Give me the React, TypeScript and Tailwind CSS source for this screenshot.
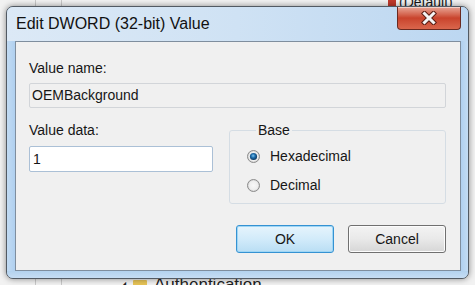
import React from "react";

const font = { fontFamily: '"Liberation Sans", Arial, sans-serif' };

function Radio({ checked, id }: { checked?: boolean; id: string }) {
	return (
		<svg width="13" height="13" viewBox="0 0 13 13" className="shrink-0">
			<defs>
				<radialGradient id={`rf-${id}`} cx="0.5" cy="0.5" r="0.5">
					<stop offset="0%" stopColor="#f8f8f8" />
					<stop offset="70%" stopColor="#eeeeee" />
					<stop offset="100%" stopColor="#cfcfcf" />
				</radialGradient>
				<radialGradient id={`rd-${id}`} cx="0.45" cy="0.4" r="0.6">
					<stop offset="0%" stopColor="#7cc4ee" />
					<stop offset="45%" stopColor="#1f6fae" />
					<stop offset="100%" stopColor="#0c355c" />
				</radialGradient>
			</defs>
			<circle cx="6.5" cy="6.5" r="6" fill={`url(#rf-${id})`} stroke="#8c8c8c" strokeWidth="1" />
			{checked && <circle cx="6.5" cy="6.5" r="3.6" fill={`url(#rd-${id})`} />}
		</svg>
	);
}

function CloseGlyph() {
	return (
		<svg width="16" height="14" viewBox="0 0 16 14">
			<path d="M3.5 2.5 L12.5 11.5 M12.5 2.5 L3.5 11.5" stroke="#5b1e14" strokeWidth="5" strokeLinecap="square" />
			<path d="M3.5 2.5 L12.5 11.5 M12.5 2.5 L3.5 11.5" stroke="#f4f4f4" strokeWidth="3" strokeLinecap="square" />
		</svg>
	);
}

export default function App() {
	return (
		<div className="relative w-[475px] h-[285px] overflow-hidden bg-[#f2f2f2] text-[#161616]" style={font}>
			{/* regedit window behind */}
			<div className="absolute inset-0 flex">
				<div className="w-[36px] border-r border-[#c9c9c9]" />
				<div className="w-[26px] border-r border-[#c9c9c9]" />
				<div className="flex-1" />
			</div>
			<div className="absolute left-[388px] top-[-4px] flex items-center gap-[3px] text-[14px] leading-[12px]">
				<span className="w-[8px] h-[7px] bg-[#c0392b]" />
				<span>(Default)</span>
			</div>
			<div className="absolute left-[120px] top-[276px] flex items-center gap-[7px] text-[17px] leading-[18px] text-[#222]">
				<span className="text-[8px]">◢</span>
				<span className="w-[14px] h-[11px] bg-[#e6c356] rounded-[1px]" />
				<span>Authentication</span>
			</div>

			{/* dialog window */}
			<div className="absolute left-[6px] top-[6px] w-[463px] h-[273px] rounded-[7px] border border-[#525a63] bg-[#b9d5f0] shadow-[0_0_6px_rgba(0,0,0,0.45)] flex flex-col overflow-hidden">
				<div className="h-[34px] flex items-start bg-gradient-to-r from-[#dce9f6] via-[#cfe2f4] to-[#bcd7f1]">
					<div className="pl-[9px] mt-[7px] text-[16px] leading-[20px] text-[#111]">
						Edit DWORD (32-bit) Value
					</div>
					<div className="ml-auto mr-[7px] w-[64px] h-[23px] rounded-b-[4px] border border-t-0 border-[#6a2a20] bg-gradient-to-b from-[#e7a596] via-[#c9432c] to-[#d9664c] flex items-center justify-center shadow-[inset_0_1px_0_rgba(255,255,255,0.5)]">
						<CloseGlyph />
					</div>
				</div>
				<div className="flex-1 flex">
					<div className="w-[8px] bg-gradient-to-r from-[#c2dbf3] to-[#b0d0ef]" />
					<div className="w-[446px] border border-[#7f8e9e] bg-[#f0f0f0] pt-[18px] pl-[13px] pr-[14px] flex flex-col text-[14px] leading-[17px]">
						<div>Value name:</div>
						<div className="mt-[6px] h-[25px] border border-[#d2d5d9] rounded-[2px] bg-[#f0f0f0] pl-[2px] flex items-center">
							OEMBackground
						</div>
						<div className="mt-[14px] flex items-start gap-[16px]">
							<div className="w-[184px] flex flex-col">
								<div>Value data:</div>
								<div className="mt-[7px] h-[26px] border border-[#abc0d6] rounded-[2px] bg-white pl-[3px] flex items-center">
									1
								</div>
							</div>
							<fieldset className="flex-1 border border-[#d5dde4] rounded-[3px] pl-[17px] pb-[9px]">
								<legend className="ml-[9px] px-[2px] leading-[17px]">Base</legend>
								<div className="mt-[9px] flex items-center gap-[10px]">
									<Radio checked id="hex" />
									<span>Hexadecimal</span>
								</div>
								<div className="mt-[12px] flex items-center gap-[10px]">
									<Radio id="dec" />
									<span>Decimal</span>
								</div>
							</fieldset>
						</div>
						<div className="mt-[21px] flex justify-end gap-[14px]">
							<button className="w-[98px] h-[28px] rounded-[3px] border border-[#3592d2] bg-gradient-to-b from-[#e6f4fc] via-[#d2ebfa] to-[#b9def4] shadow-[inset_0_0_0_1px_#9fd6f5] text-[14px]">
								OK
							</button>
							<button className="w-[98px] h-[28px] rounded-[3px] border border-[#707070] bg-gradient-to-b from-[#f3f3f3] via-[#e9e9e9] to-[#d6d6d6] shadow-[inset_0_0_0_1px_#fcfcfc] text-[14px]">
								Cancel
							</button>
						</div>
					</div>
					<div className="w-[7px] bg-gradient-to-r from-[#b0d0ef] to-[#c3dcf3]" />
				</div>
				<div className="h-[7px] bg-gradient-to-b from-[#b3d2ef] to-[#c6ddf3]" />
			</div>
		</div>
	);
}
